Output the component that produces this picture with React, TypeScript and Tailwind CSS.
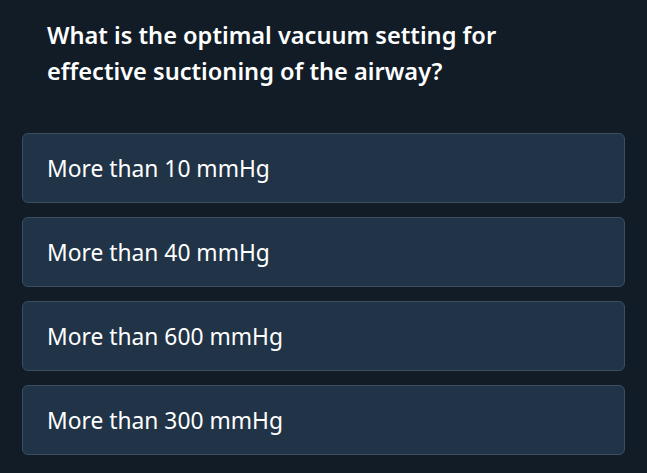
const options = ['More than 10 mmHg', 'More than 40 mmHg', 'More than 600 mmHg', 'More than 300 mmHg']

export default function App() {
  return (
    <div
      className="min-h-screen bg-[#111c27] px-[22px] pt-[17px]"
      style={{ fontFamily: '"Noto Sans", sans-serif' }}
    >
      <h1 className="px-[25px] text-[23.6px] font-semibold leading-[36px] text-white">
        What is the optimal vacuum setting for
        <br />
        effective suctioning of the airway?
      </h1>
      <div className="mt-[44px] flex flex-col gap-[14px]">
        {options.map((opt) => (
          <button
            key={opt}
            type="button"
            className="flex h-[70px] items-center rounded-md border border-[#3a4f64] bg-[#213447] px-[24px] pt-[3px] text-left text-[22.8px] text-white"
          >
            {opt}
          </button>
        ))}
      </div>
    </div>
  )
}
